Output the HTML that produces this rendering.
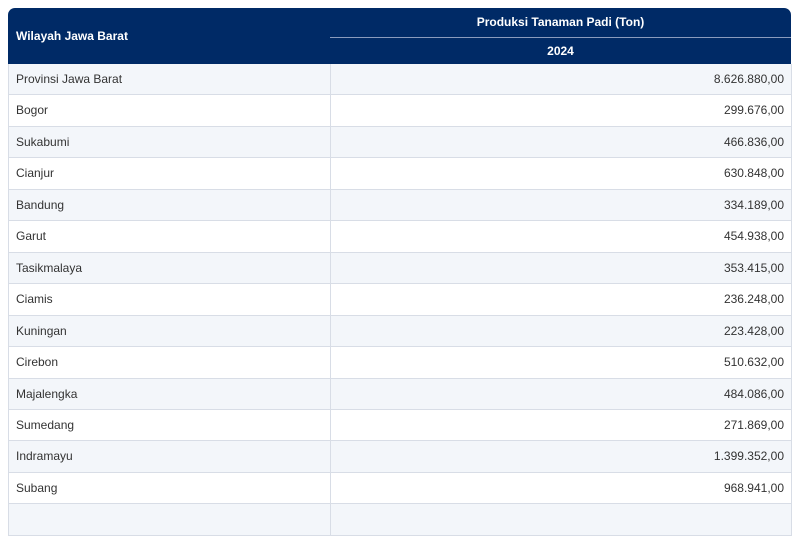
<!DOCTYPE html>
<html><head><style>
html,body{margin:0;height:507px;overflow:hidden;}
body{background:#fff;font-family:"Liberation Sans",sans-serif;}
.hd{position:absolute;left:8px;top:8px;width:783px;height:56px;background:#002a66;border-radius:7px 7px 0 0;color:#fff;font-weight:bold;font-size:12px;}
.hd .a{position:absolute;left:8px;top:21px;}
.hd .b{position:absolute;left:322px;right:0;top:0;height:29px;line-height:29px;text-align:center;border-bottom:1px solid #8a9bbd;}
.hd .c{position:absolute;left:322px;right:0;top:30px;height:26px;line-height:26px;text-align:center;}
.rows{position:absolute;left:8px;top:64px;width:782px;border-left:1px solid #d8dde6;border-right:1px solid #d8dde6;}
.r{height:30.46px;border-bottom:1px solid #d8dde6;display:flex;line-height:30.46px;font-size:12px;color:#333;}
.r:nth-child(odd){background:#f3f6fa}
.r div:first-child{width:314px;padding-left:7px;border-right:1px solid #d8dde6;}
.r div:last-child{flex:1;text-align:right;padding-right:7px;}
</style></head><body>
<div class="hd"><div class="a">Wilayah Jawa Barat</div><div class="b">Produksi Tanaman Padi (Ton)</div><div class="c">2024</div></div>
<div class="rows">
<div class="r"><div>Provinsi Jawa Barat</div><div>8.626.880,00</div></div>
<div class="r"><div>Bogor</div><div>299.676,00</div></div>
<div class="r"><div>Sukabumi</div><div>466.836,00</div></div>
<div class="r"><div>Cianjur</div><div>630.848,00</div></div>
<div class="r"><div>Bandung</div><div>334.189,00</div></div>
<div class="r"><div>Garut</div><div>454.938,00</div></div>
<div class="r"><div>Tasikmalaya</div><div>353.415,00</div></div>
<div class="r"><div>Ciamis</div><div>236.248,00</div></div>
<div class="r"><div>Kuningan</div><div>223.428,00</div></div>
<div class="r"><div>Cirebon</div><div>510.632,00</div></div>
<div class="r"><div>Majalengka</div><div>484.086,00</div></div>
<div class="r"><div>Sumedang</div><div>271.869,00</div></div>
<div class="r"><div>Indramayu</div><div>1.399.352,00</div></div>
<div class="r"><div>Subang</div><div>968.941,00</div></div>
<div class="r"><div>&nbsp;</div><div>&nbsp;</div></div>
</div>
</body></html>
